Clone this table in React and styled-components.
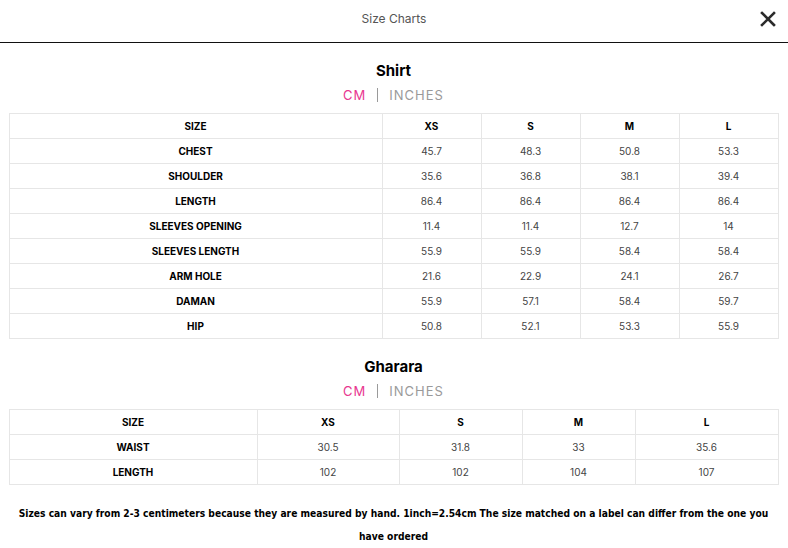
import React from "react";
import styled, { createGlobalStyle } from "styled-components";

const GlobalStyle = createGlobalStyle`
	body {
		margin: 0;
		background: #ffffff;
		font-family: Inter, "Open Sans", sans-serif;
	}
`;

const Modal = styled.div`
	width: 788px;
	min-height: 548px;
	background: #ffffff;
`;

const Header = styled.div`
	position: relative;
	height: 42px;
	display: flex;
	align-items: center;
	justify-content: center;
	border-bottom: 1px solid #111111;
`;

const HeaderTitle = styled.span`
	font-size: 12px;
	color: #555555;
	margin-top: -5px;
`;

const CloseButton = styled.button`
	position: absolute;
	right: 10px;
	top: 9px;
	width: 20px;
	height: 20px;
	border: none;
	background: none;
	padding: 0;
	display: flex;
	align-items: center;
	justify-content: center;
	cursor: pointer;
`;

const Body = styled.div`
	padding: 17px 10px 0 9px;
`;

const Section = styled.section`
	display: flex;
	flex-direction: column;
	align-items: center;
	margin-bottom: 17px;
`;

const SectionTitle = styled.h2`
	margin: 0;
	font-size: 15px;
	line-height: 22px;
	font-weight: 700;
	color: #000000;
`;

const UnitToggle = styled.div`
	display: flex;
	align-items: center;
	gap: 11px;
	margin-top: 3px;
	margin-bottom: 8px;
	font-size: 13px;
	line-height: 20px;
	letter-spacing: 1px;
`;

const Unit = styled.span`
	color: ${(p) => (p.active ? "#e8368f" : "#9a9a9a")};
`;

const Divider = styled.span`
	width: 1px;
	height: 14px;
	background: #9a9a9a;
`;

const Table = styled.table`
	width: 100%;
	border-collapse: collapse;
	table-layout: fixed;
`;

const Cell = styled.td`
	height: 24px;
	padding: 0;
	border: 1px solid #e6e6e6;
	text-align: center;
	font-size: 10px;
	font-weight: ${(p) => (p.bold ? 700 : 400)};
	color: ${(p) => (p.bold ? "#000000" : "#444444")};
	text-transform: uppercase;
`;

const Note = styled.p`
	margin: 0;
	text-align: center;
	font-family: "DejaVu Sans Condensed", "DejaVu Sans", sans-serif;
	font-weight: 700;
	font-size: 10.2px;
	line-height: 23px;
	color: #000000;
`;

const shirt = {
	cols: [373, 99, 99, 99, 99],
	rows: [
		["Chest", "45.7", "48.3", "50.8", "53.3"],
		["Shoulder", "35.6", "36.8", "38.1", "39.4"],
		["Length", "86.4", "86.4", "86.4", "86.4"],
		["Sleeves Opening", "11.4", "11.4", "12.7", "14"],
		["Sleeves Length", "55.9", "55.9", "58.4", "58.4"],
		["Arm Hole", "21.6", "22.9", "24.1", "26.7"],
		["Daman", "55.9", "57.1", "58.4", "59.7"],
		["Hip", "50.8", "52.1", "53.3", "55.9"],
	],
};

const gharara = {
	cols: [248, 142, 123, 113, 143],
	rows: [
		["Waist", "30.5", "31.8", "33", "35.6"],
		["Length", "102", "102", "104", "107"],
	],
};

const sizes = ["Size", "XS", "S", "M", "L"];

const SizeTable = ({ title, data }) => (
	<Section>
		<SectionTitle>{title}</SectionTitle>
		<UnitToggle>
			<Unit active>CM</Unit>
			<Divider />
			<Unit>INCHES</Unit>
		</UnitToggle>
		<Table>
			<colgroup>
				{data.cols.map((w, i) => (
					<col key={i} style={{ width: w }} />
				))}
			</colgroup>
			<tbody>
				<tr>
					{sizes.map((s) => (
						<Cell key={s} bold>
							{s}
						</Cell>
					))}
				</tr>
				{data.rows.map((row) => (
					<tr key={row[0]}>
						{row.map((v, i) => (
							<Cell key={i} bold={i === 0}>
								{v}
							</Cell>
						))}
					</tr>
				))}
			</tbody>
		</Table>
	</Section>
);

const App = () => (
	<Modal>
		<GlobalStyle />
		<Header>
			<HeaderTitle>Size Charts</HeaderTitle>
			<CloseButton aria-label="close">
				<svg width="16" height="16" viewBox="0 0 16 16">
					<path d="M2 2 L14 14 M14 2 L2 14" stroke="#2b2b2b" strokeWidth="2.6" strokeLinecap="square" />
				</svg>
			</CloseButton>
		</Header>
		<Body>
			<SizeTable title="Shirt" data={shirt} />
			<SizeTable title="Gharara" data={gharara} />
			<Note>
				Sizes can vary from 2-3 centimeters because they are measured by hand. 1inch=2.54cm The size matched on a
				label can differ from the one you have ordered
			</Note>
		</Body>
	</Modal>
);

export default App;
